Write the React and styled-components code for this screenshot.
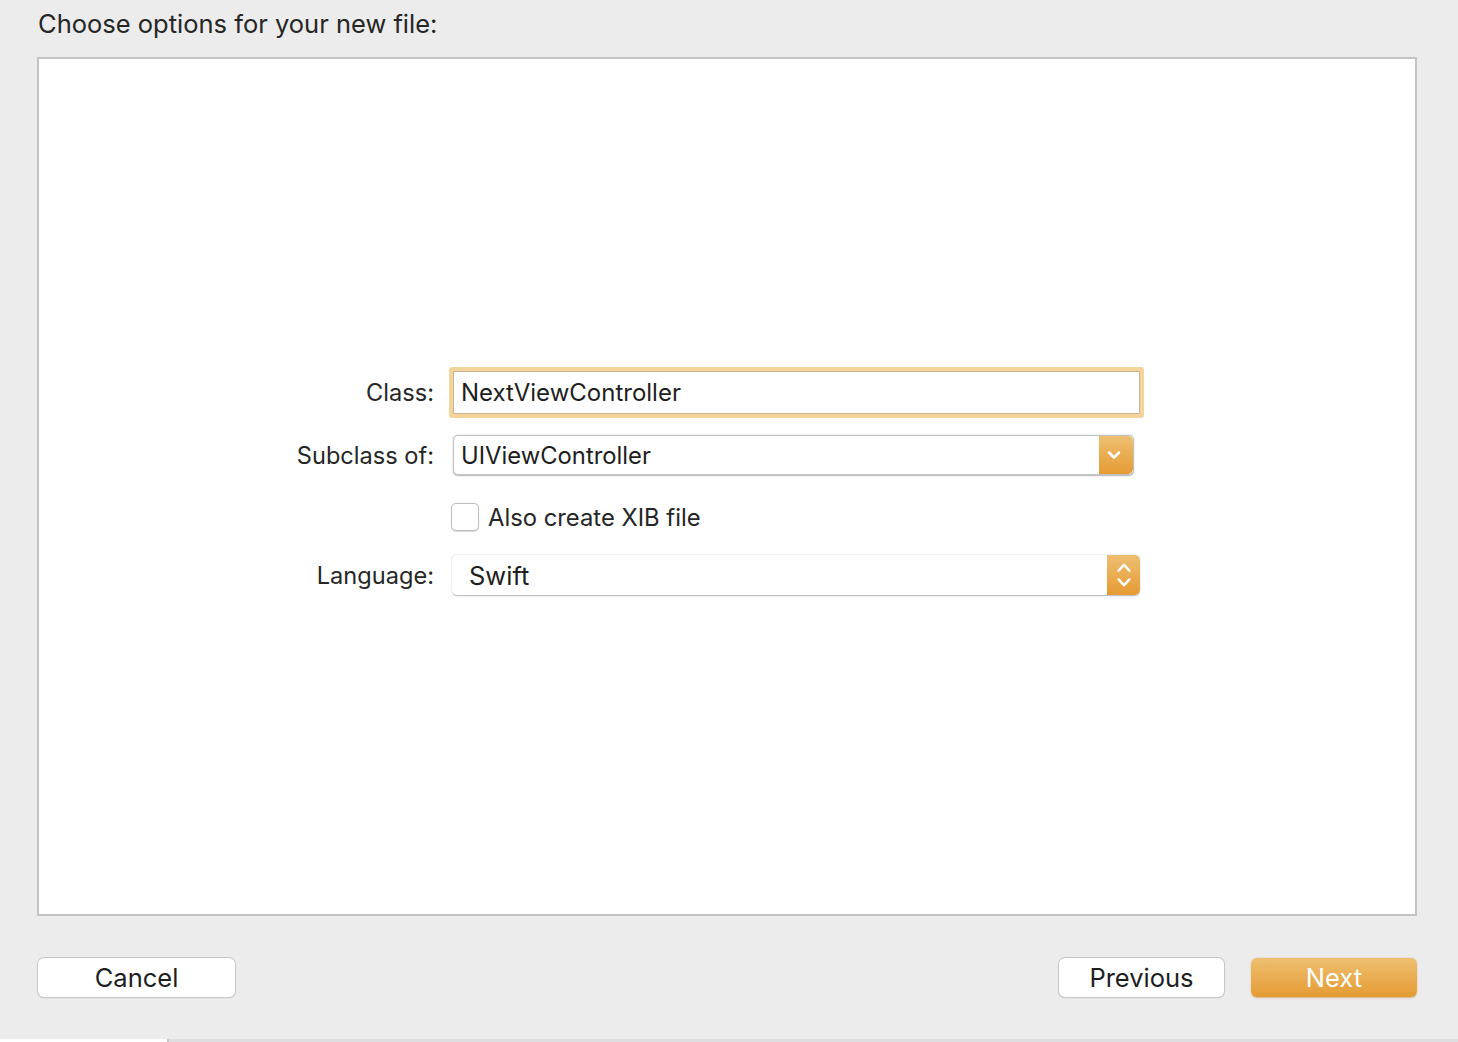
import React from "react";
import styled, { createGlobalStyle } from "styled-components";

const GlobalStyle = createGlobalStyle`
  html, body {
    margin: 0;
    padding: 0;
    background: #ececec;
  }
  body {
    font-family: Inter, "Liberation Sans", Arial, sans-serif;
    color: #262626;
  }
`;

const orange = "linear-gradient(to bottom, #eebf71 0%, #e59b33 100%)";

const Window = styled.div`
  width: 1458px;
  height: 1042px;
  display: flex;
  flex-direction: column;
  background: #ececec;
  box-sizing: border-box;
`;

const Content = styled.div`
  flex: 1;
  display: flex;
  flex-direction: column;
  padding: 0 41px 0 37px;
`;

const Title = styled.h1`
  margin: 0;
  padding: 10px 0 0 1px;
  height: 57px;
  box-sizing: border-box;
  font-size: 25.5px;
  line-height: 28px;
  font-weight: 400;
  color: #262626;
`;

const Panel = styled.div`
  height: 859px;
  box-sizing: border-box;
  border: 2px solid #c3c3c3;
  background: #ffffff;
  display: flex;
  align-items: center;
  padding-bottom: 10px;
`;

const Form = styled.div`
  display: grid;
  grid-template-columns: 395px auto;
  grid-template-rows: 63px 62px 62px 54px;
  column-gap: 18px;
  align-items: center;
`;

const Label = styled.label`
  text-align: right;
  font-size: 23.6px;
  color: #262626;
`;

const TextField = styled.div`
  width: 687px;
  height: 43px;
  box-sizing: border-box;
  margin-left: 1px;
  border: 1px solid #c9b48e;
  background: #fff;
  border-radius: 1px;
  box-shadow: 0 0 0 4px #f4d49a;
  display: flex;
  align-items: center;
  padding-left: 7px;
  font-size: 24px;
  color: #1e1e1e;
`;

const Combo = styled.div`
  width: ${(p) => p.$width}px;
  height: 40px;
  box-sizing: border-box;
  margin-left: ${(p) => p.$offset || 0}px;
  display: flex;
  border-radius: 5px;
  background: #fff;
  box-shadow: 0 0.5px 1.5px rgba(0, 0, 0, 0.3);
  border: ${(p) => (p.$square ? "1px solid #c2c2c2" : "none")};
  overflow: hidden;
`;

const ComboText = styled.div`
  flex: 1;
  display: flex;
  align-items: center;
  padding-left: ${(p) => p.$pad}px;
  font-size: ${(p) => p.$size}px;
  color: #1e1e1e;
`;

const ArrowButton = styled.div`
  width: ${(p) => p.$width}px;
  background: ${orange};
  display: flex;
  align-items: center;
  justify-content: center;
  border-top-right-radius: 5px;
  border-bottom-right-radius: 5px;
`;

const CheckRow = styled.label`
  display: flex;
  align-items: center;
  gap: 9px;
  margin-left: -1px;
  font-size: 23.8px;
  color: #262626;
`;

const Checkbox = styled.span`
  width: 28px;
  height: 28px;
  box-sizing: border-box;
  border-radius: 5px;
  background: #fff;
  border: 1px solid #bdbdbd;
  box-shadow: 0 0.5px 1px rgba(0, 0, 0, 0.15);
`;

const Footer = styled.div`
  display: flex;
  align-items: center;
  padding-top: 42px;
  padding-left: 1px;
`;

const Spacer = styled.div`
  flex: 1;
`;

const Button = styled.button`
  width: ${(p) => p.$width}px;
  height: 39px;
  margin-left: ${(p) => p.$gap || 0}px;
  border-radius: 6px;
  font-family: Inter, "Liberation Sans", Arial, sans-serif;
  font-size: 25.5px;
  padding: 0;
  cursor: pointer;
  border: none;
  background: ${(p) => (p.$primary ? orange : "#ffffff")};
  color: ${(p) => (p.$primary ? "#ffffff" : "#1e1e1e")};
  box-shadow: ${(p) =>
    p.$primary
      ? "0 0.5px 1.5px rgba(180, 110, 20, 0.45)"
      : "0 0 0 1px #c7c7c7, 0 1px 1.5px rgba(0, 0, 0, 0.18)"};
`;

const BottomStrip = styled.div`
  height: 3px;
  display: flex;
`;

const StripLeft = styled.div`
  width: 167px;
  background: #ffffff;
`;

const StripRest = styled.div`
  flex: 1;
  background: #dedee0;
  border-left: 2px solid #c7c7c9;
`;

// popup arrows, drawn white over the orange button
const ChevronDown = () => (
  <svg width="16" height="10" viewBox="0 0 16 10" style={{ marginRight: 4 }}>
    <path d="M3 2.5 L8 7.5 L13 2.5" fill="none" stroke="#fff" strokeWidth="2.5" strokeLinecap="round" strokeLinejoin="round" />
  </svg>
);

const UpDown = () => (
  <svg width="16" height="28" viewBox="0 0 16 28">
    <path d="M2.6 9.6 L8 3.8 L13.4 9.6" fill="none" stroke="#fff" strokeWidth="2.4" strokeLinecap="round" strokeLinejoin="round" />
    <path d="M2.6 18.4 L8 24.2 L13.4 18.4" fill="none" stroke="#fff" strokeWidth="2.4" strokeLinecap="round" strokeLinejoin="round" />
  </svg>
);

export default function App() {
  return (
    <>
      <GlobalStyle />
      <Window>
        <Content>
          <Title>Choose options for your new file:</Title>
          <Panel>
            <Form>
              <Label>Class:</Label>
              <TextField>NextViewController</TextField>

              <Label>Subclass of:</Label>
              <Combo $width={681} $offset={1} $square>
                <ComboText $pad={7} $size={23.8}>UIViewController</ComboText>
                <ArrowButton $width={34}>
                  <ChevronDown />
                </ArrowButton>
              </Combo>

              <span />
              <CheckRow>
                <Checkbox />
                Also create XIB file
              </CheckRow>

              <Label>Language:</Label>
              <Combo $width={688}>
                <ComboText $pad={17} $size={25.5}>Swift</ComboText>
                <ArrowButton $width={33}>
                  <UpDown />
                </ArrowButton>
              </Combo>
            </Form>
          </Panel>
          <Footer>
            <Button $width={197}>Cancel</Button>
            <Spacer />
            <Button $width={165}>Previous</Button>
            <Button $width={166} $gap={27} $primary>
              Next
            </Button>
          </Footer>
        </Content>
        <BottomStrip>
          <StripLeft />
          <StripRest />
        </BottomStrip>
      </Window>
    </>
  );
}
